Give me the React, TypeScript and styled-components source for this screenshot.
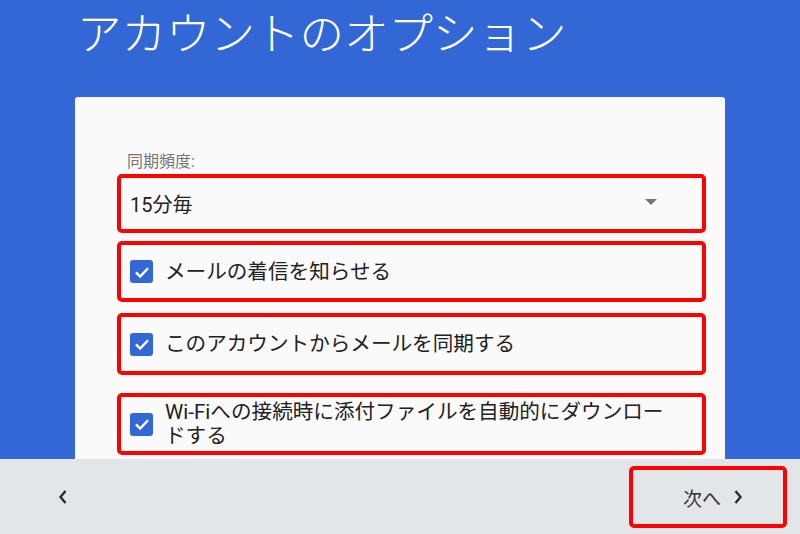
import React from "react";
import styled, { createGlobalStyle } from "styled-components";

const GlobalStyle = createGlobalStyle`
  html, body {
    margin: 0;
    padding: 0;
    height: 100%;
  }
  body {
    font-family: Roboto, "Noto Sans CJK JP", sans-serif;
    color: #212121;
  }
  #root {
    height: 100%;
  }
`;

const Page = styled.div`
  height: 100vh;
  display: flex;
  flex-direction: column;
  overflow: hidden;
`;

const Main = styled.main`
  flex: 1;
  min-height: 0;
  overflow: hidden;
  background: #3367d6;
  padding: 0 75px;
`;

const Title = styled.h1`
  margin: 0;
  padding: 9px 0 0 2px;
  height: 97px;
  box-sizing: border-box;
  font-family: Roboto, "Noto Sans CJK JP", sans-serif;
  font-weight: 300;
  font-size: 44.5px;
  line-height: 52px;
  color: #ffffff;
`;

const Card = styled.section`
  background: #fafafa;
  border-radius: 3px;
  padding: 55px 19px 40px 42px;
`;

const FieldLabel = styled.div`
  font-size: 16px;
  line-height: 20px;
  color: #757575;
  padding-left: 10px;
  margin-bottom: 2px;
`;

const Outline = styled.div<{ $h: number; $gap: number }>`
  box-sizing: border-box;
  height: ${(p) => p.$h}px;
  margin-top: ${(p) => p.$gap}px;
  border: 4px solid #ff0000;
  border-radius: 5px;
  display: flex;
  align-items: center;
  padding: 0 22px 0 9px;
`;

const SelectValue = styled.span`
  flex: 1;
  font-size: 20px;
  color: #212121;
`;

const Caret = styled.span`
  width: 0;
  height: 0;
  border-left: 6px solid transparent;
  border-right: 6px solid transparent;
  border-top: 6px solid #757575;
  margin-right: 23px;
  margin-top: -4px;
`;

const Box = styled.span`
  flex: none;
  width: 23px;
  height: 23px;
  border-radius: 3px;
  background: #3367d6;
  display: flex;
  align-items: center;
  justify-content: center;
  margin-right: 12px;
`;

const CheckText = styled.span`
  font-size: 20.6px;
  line-height: 24px;
  color: #212121;
  padding-right: 4px;
`;

const Footer = styled.footer`
  height: 75px;
  flex: none;
  background: #e3e6e8;
  display: flex;
  align-items: center;
  justify-content: space-between;
  padding: 0 13px 0 54px;
`;

const NavButton = styled.button<{ $outlined?: boolean }>`
  display: flex;
  align-items: center;
  gap: 12px;
  background: none;
  font-family: inherit;
  font-size: 19px;
  color: #333;
  cursor: pointer;
  box-sizing: border-box;
  border: ${(p) => (p.$outlined ? "4px solid #ff0000" : "none")};
  border-radius: 5px;
  height: ${(p) => (p.$outlined ? "62px" : "auto")};
  width: ${(p) => (p.$outlined ? "158px" : "auto")};
  padding: ${(p) => (p.$outlined ? "0 0 0 50px" : "4px")};
  margin-top: ${(p) => (p.$outlined ? "1px" : "0")};
`;

const Chevron = ({ dir }: { dir: "left" | "right" }) => (
  <svg width="10" height="16" viewBox="0 0 10 16">
    <path
      d={dir === "left" ? "M7.5 2 L2.5 8 L7.5 14" : "M2.5 2 L7.5 8 L2.5 14"}
      fill="none"
      stroke="#2b2b2b"
      strokeWidth="2.4"
      strokeLinejoin="miter"
    />
  </svg>
);

const Check = () => (
  <Box>
    <svg width="18" height="18" viewBox="0 0 24 24">
      <path
        d="M4 12.5 L9.5 18 L20 7"
        fill="none"
        stroke="#ffffff"
        strokeWidth="3.2"
      />
    </svg>
  </Box>
);

const options = [
  { label: "メールの着信を知らせる", h: 61, gap: 8 },
  { label: "このアカウントからメールを同期する", h: 62, gap: 11 },
  { label: "Wi-Fiへの接続時に添付ファイルを自動的にダウンロードする", h: 62, gap: 18 },
];

function App() {
  return (
    <>
      <GlobalStyle />
      <Page>
        <Main>
          <Title>アカウントのオプション</Title>
          <Card>
            <FieldLabel>同期頻度:</FieldLabel>
            <Outline $h={59} $gap={0}>
              <SelectValue>15分毎</SelectValue>
              <Caret />
            </Outline>
            {options.map((o) => (
              <Outline key={o.label} $h={o.h} $gap={o.gap}>
                <Check />
                <CheckText>{o.label}</CheckText>
              </Outline>
            ))}
          </Card>
        </Main>
        <Footer>
          <NavButton>
            <Chevron dir="left" />
          </NavButton>
          <NavButton $outlined>
            次へ
            <Chevron dir="right" />
          </NavButton>
        </Footer>
      </Page>
    </>
  );
}

export default App;
